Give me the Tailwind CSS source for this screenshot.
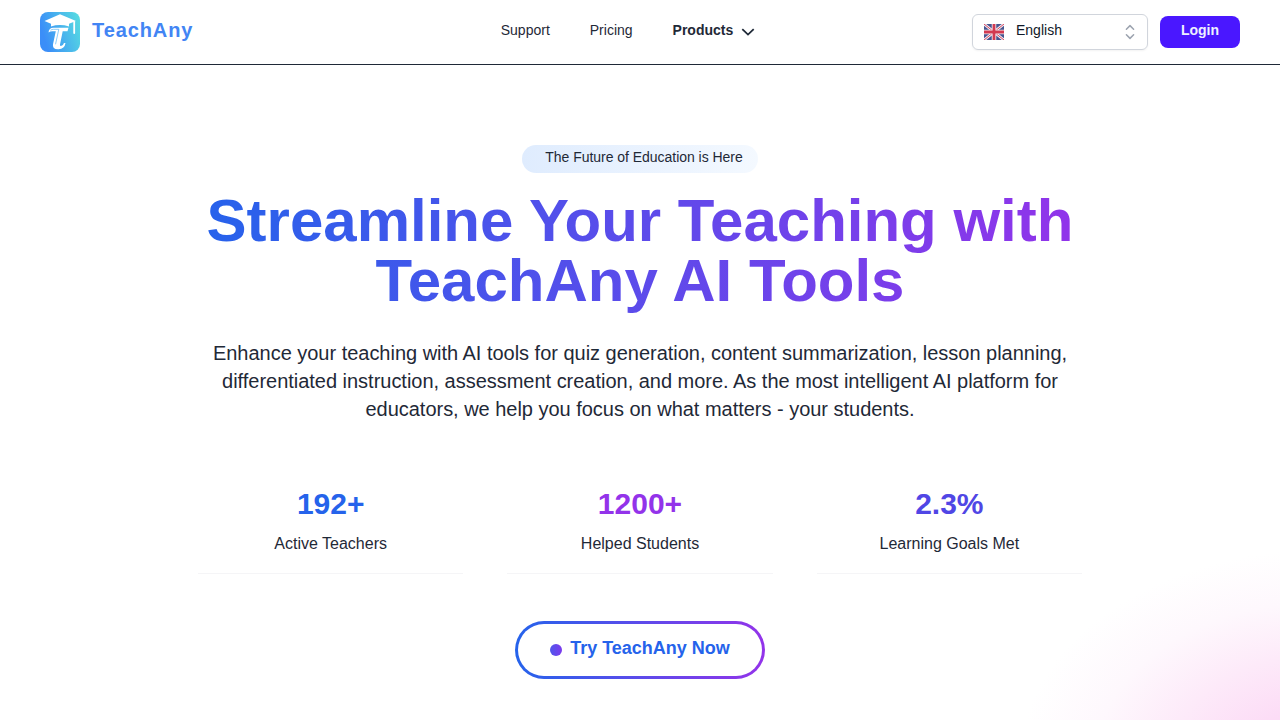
<!DOCTYPE html>
<html lang="en">
<head>
  <meta charset="UTF-8">
  <meta name="viewport" content="width=device-width, initial-scale=1.0">
  <title>TeachAny</title>
  <script src="https://cdn.jsdelivr.net/npm/@tailwindcss/browser@4"></script>
</head>
<body class="h-[720px] overflow-hidden bg-white text-[#1f2937] font-['Liberation_Sans',Arial,sans-serif]">
  <div class="relative h-full overflow-hidden">
    <!-- Background glow -->
    <div class="absolute left-[1020px] top-[550px] w-[600px] h-[420px] bg-[radial-gradient(closest-side,#fcd4f3,#fcdcf6_25%,#fdeaf9_50%,#fef8fd_75%,#ffffff)]"></div>

    <!-- Header -->
    <header class="relative h-[65px] px-10 flex items-center justify-between border-b border-[#1f2937] bg-white">
      <a href="#" class="w-[244px] flex items-center gap-3">
        <svg class="size-10" viewBox="0 0 40 40" fill="none">
          <defs>
            <linearGradient id="logo" x1="0" y1="0.3" x2="1" y2="0">
              <stop offset="0" stop-color="#3b8ef8"/>
              <stop offset="1" stop-color="#58dfe0"/>
            </linearGradient>
          </defs>
          <rect width="40" height="40" rx="8" fill="url(#logo)"/>
          <path d="M4.500 9 20 2.300 36 9l-7 2.800v2.700q-9-2.800-18 0v-2.700z" fill="#fff"/>
          <path d="M34.200 10v11" stroke="#fff" stroke-width="1.800" stroke-linecap="round"/>
          <path d="M8.500 20.500q.3-4.800 5-4.800H28.500l-1 3.600h-4.800L20 32.500q-.2 1.500 1 1.500 2.200-.3 3-3h1.500q-.8 6-7 6.300-6.500.2-5.500-5l2.800-13h-3.300q-2.300 0-4 1.200z" fill="#fff"/>
          <path d="M10.500 18.200q1.500-.9 3-.9h5.300l-3.300 15" stroke="#5db8f6" stroke-width=".7"/>
        </svg>
        <span class="pb-1 text-xl leading-7 font-bold tracking-[0.9px] text-[#4285f4]">TeachAny</span>
      </a>

      <nav class="flex items-center gap-10 pb-1 text-sm">
        <a href="#">Support</a>
        <a href="#">Pricing</a>
        <button class="flex items-center gap-2 font-bold">
          Products
          <svg class="relative top-0.5 w-3.5 h-2" viewBox="0 0 14 8" fill="none" stroke="currentColor" stroke-width="1.800"><path d="m1.300 1.200 5.700 5.400 5.700-5.400"/></svg>
        </button>
      </nav>

      <div class="w-[268px] flex items-center gap-3">
        <button class="w-44 h-9 pl-[11px] pr-[7px] flex items-center rounded-md border border-gray-300 shadow-xs text-sm text-gray-900">
          <svg class="w-5 h-4" viewBox="0 0 20 16">
            <rect width="20" height="16" fill="#46548f"/>
            <path d="m0 0 20 16M20 0 0 16" stroke="#f3eef4" stroke-width="2.800"/>
            <path d="m0 0 20 16M20 0 0 16" stroke="#d8485f" stroke-width="1"/>
            <path d="M10 0v16M0 8h20" stroke="#f3eef4" stroke-width="4.500"/>
            <path d="M10 0v16M0 8h20" stroke="#d23a50" stroke-width="2.800"/>
          </svg>
          <span class="ml-3 pb-1">English</span>
          <svg class="ml-auto size-5" viewBox="0 0 20 20" fill="none" stroke="#9ca3af" stroke-width="1.500" stroke-linecap="round" stroke-linejoin="round"><path d="m6.400 7.200 3.600-3.600 3.600 3.600M6.400 12.800l3.600 3.600 3.600-3.600"/></svg>
        </button>
        <a href="#" class="w-20 h-8 pb-1 flex items-center justify-center rounded-lg bg-[#4a17ff] text-sm font-bold text-[#eef0ff]">Login</a>
      </div>
    </header>

    <!-- Hero -->
    <main class="relative w-4xl mx-auto pt-20 flex flex-col items-center text-center">
      <div class="w-[236px] h-7 pl-2 pb-1 flex items-center justify-center rounded-full bg-linear-to-r from-[#dfecfe] to-[#f4f9ff] text-sm tracking-[-0.03px] whitespace-nowrap">The Future of Education is Here</div>
      <h1 class="mt-[18px] w-full pb-1 text-6xl leading-[60px] font-bold bg-[linear-gradient(to_right,#2563eb,#9333ea)] bg-clip-text text-transparent">Streamline Your Teaching with<br>TeachAny AI Tools</h1>
      <p class="mt-6 text-xl leading-7 tracking-[-0.02px]">Enhance your teaching with AI tools for quiz generation, content summarization, lesson planning,<br>differentiated instruction, assessment creation, and more. As the most intelligent AI platform for<br>educators, we help you focus on what matters - your students.</p>

      <!-- Stats -->
      <div class="mt-12 w-full grid grid-cols-3 gap-8">
        <div class="h-[103px] pt-[15px] px-1.5">
          <div class="text-3xl leading-9 font-bold text-[#2563eb]">192+</div>
          <div class="mt-2.5 leading-6">Active Teachers</div>
          <div class="mt-[17px] h-px bg-[#f5f5f7]"></div>
        </div>
        <div class="h-[103px] pt-[15px] px-1.5">
          <div class="text-3xl leading-9 font-bold text-[#9333ea]">1200+</div>
          <div class="mt-2.5 leading-6">Helped Students</div>
          <div class="mt-[17px] h-px bg-[#f5f5f7]"></div>
        </div>
        <div class="h-[103px] pt-[15px] px-1.5">
          <div class="text-3xl leading-9 font-bold text-[#5046e5]">2.3%</div>
          <div class="mt-2.5 leading-6">Learning Goals Met</div>
          <div class="mt-[17px] h-px bg-[#f5f5f7]"></div>
        </div>
      </div>

      <!-- Call to action -->
      <a href="#" class="mt-[47px] w-[250px] h-[58px] p-[3px] rounded-full bg-[linear-gradient(to_right,#2563eb,#9333ea)]">
        <span class="h-full flex items-center justify-center gap-2 rounded-full bg-white">
          <span class="size-3 rounded-full bg-[linear-gradient(to_right,#4f56eb,#7c3aed)]"></span>
          <span class="pb-1 text-lg font-bold text-[#2563eb]">Try TeachAny Now</span>
        </span>
      </a>
    </main>
  </div>
</body>
</html>
